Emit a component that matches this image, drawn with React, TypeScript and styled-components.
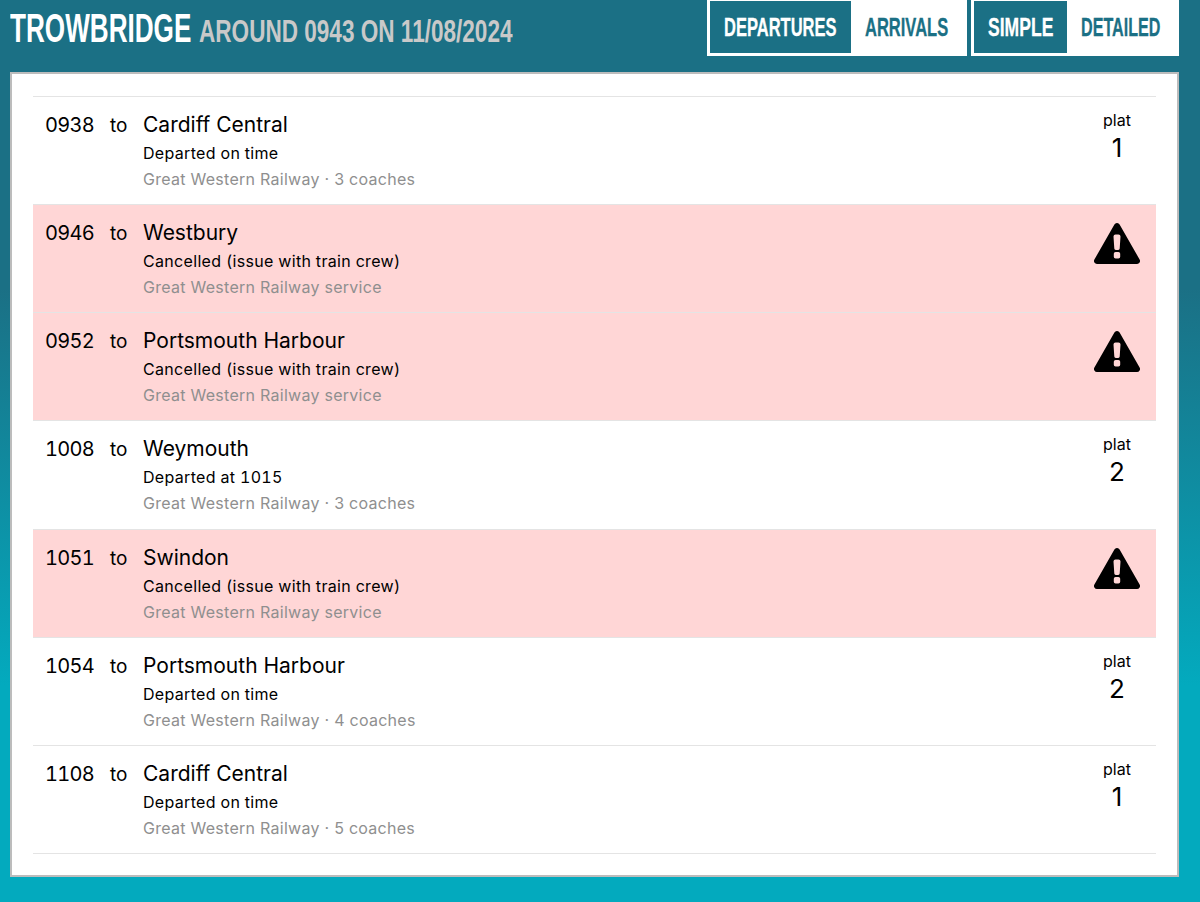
import React from "react";
import styled, { createGlobalStyle } from "styled-components";

const Global = createGlobalStyle`
  html, body { margin: 0; padding: 0; }
  body {
    height: 902px;
    overflow: hidden;
    background: linear-gradient(180deg, #1b7085 0%, #1b7085 32%, #03aabe 76%, #03aabe 100%);
    font-family: Inter, "Liberation Sans", sans-serif;
    color: #000;
  }
`;

const Page = styled.div`
  width: 1200px;
  height: 902px;
  box-sizing: border-box;
  padding: 0 21px 25px 10px;
  display: flex;
  flex-direction: column;
`;

const Header = styled.header`
  height: 72px;
  display: flex;
  justify-content: space-between;
  align-items: flex-start;
`;

const Title = styled.h1`
  margin: 8px 0 0;
  display: flex;
  align-items: baseline;
  gap: 8px;
  font-family: "Liberation Sans", sans-serif;
  font-weight: 700;
  line-height: 40px;
  white-space: nowrap;
`;

const Station = styled.div`
  width: 181px;
  color: #fff;
  font-size: 41px;
  & > span {
    display: inline-block;
    transform: scaleX(0.637);
    transform-origin: left;
  }
`;

const Around = styled.div`
  width: 314px;
  color: #c9c9c9;
  font-size: 32px;
  & > span {
    display: inline-block;
    transform: scaleX(0.705);
    transform-origin: left;
  }
`;

const Tabs = styled.div`
  display: flex;
  gap: 4px;
`;

const TabGroup = styled.div`
  display: flex;
  background: #fff;
  padding: 1px 0 3px 3px;
  height: 56px;
  box-sizing: border-box;
`;

const Tab = styled.div<{ $active?: boolean; $w: number; $sx: number }>`
  width: ${(p) => p.$w}px;
  box-sizing: border-box;
  padding-left: 14px;
  display: flex;
  align-items: center;
  font-family: "Liberation Sans", sans-serif;
  font-weight: 700;
  font-size: 26px;
  background: ${(p) => (p.$active ? "#1b7085" : "#fff")};
  color: ${(p) => (p.$active ? "#fff" : "#1b7085")};
  overflow: hidden;
  & > span {
    flex: none;
    display: inline-block;
    transform: scaleX(${(p) => p.$sx});
    transform-origin: left;
    white-space: nowrap;
    -webkit-text-stroke: 0.3px currentColor;
  }
`;

const Panel = styled.main`
  flex: 1;
  background: #fff;
  border: 2px solid #bcbcbc;
  box-sizing: border-box;
  padding: 22px 21px 0;
`;

const List = styled.div`
  border-top: 1px solid #e4e4e4;
`;

const Row = styled.div<{ $cancelled?: boolean }>`
  height: 108.17px;
  box-sizing: border-box;
  border-bottom: 1px solid #e4e4e4;
  background: ${(p) => (p.$cancelled ? "#ffd6d6" : "#fff")};
  display: grid;
  grid-template-columns: 66px 32px 1fr 78px;
  padding-left: 12px;
`;

const Time = styled.div`
  font-size: 20px;
  font-variant-numeric: tabular-nums;
  letter-spacing: -0.7px;
  line-height: 26px;
  padding-top: 15px;
`;

const To = styled.div`
  font-size: 19px;
  line-height: 26px;
  padding-top: 16px;
  margin-left: -1px;
`;

const Details = styled.div`
  padding-top: 15px;
  display: flex;
  flex-direction: column;
`;

const Destination = styled.div`
  font-size: 21px;
  line-height: 26px;
`;

const Status = styled.div`
  font-size: 16px;
  font-variant-numeric: tabular-nums;
  letter-spacing: 0.32px;
  line-height: 26px;
  margin-top: 2px;
`;

const Operator = styled.div`
  font-size: 16px;
  letter-spacing: 0.27px;
  line-height: 26px;
  color: #8f8f8f;
`;

const Side = styled.div`
  display: flex;
  flex-direction: column;
  align-items: center;
  padding-top: 14px;
`;

const PlatLabel = styled.div`
  font-size: 16px;
  line-height: 19px;
`;

const PlatNumber = styled.div`
  font-size: 26px;
  line-height: 34px;
  margin-top: 1px;
`;

const WarnSvg = styled.svg`
  width: 46px;
  height: 41px;
  margin-top: 4px;
  fill: #000;
`;

const WarnIcon = () => (
  <WarnSvg viewBox="0 0 46 41">
    <path
      fillRule="evenodd"
      d="M20.4 1.5a3 3 0 0 1 5.2 0L45.6 36.5a3 3 0 0 1-2.6 4.5H3a3 3 0 0 1-2.6-4.5Z
         M21.5 11.5h3a2 2 0 0 1 2 2l-.8 12a1.5 1.5 0 0 1-1.5 1.4h-2.4a1.5 1.5 0 0 1-1.5-1.4l-.8-12a2 2 0 0 1 2-2Z
         M21.6 29h2.8a1.8 1.8 0 0 1 1.8 1.8v2.9a1.8 1.8 0 0 1-1.8 1.8h-2.8a1.8 1.8 0 0 1-1.8-1.8v-2.9a1.8 1.8 0 0 1 1.8-1.8Z"
    />
  </WarnSvg>
);

type Svc = { t: string; d: string; s: string; o: string; p?: string };

const services: Svc[] = [
  { t: "0938", d: "Cardiff Central", s: "Departed on time", o: "Great Western Railway · 3 coaches", p: "1" },
  { t: "0946", d: "Westbury", s: "Cancelled (issue with train crew)", o: "Great Western Railway service" },
  { t: "0952", d: "Portsmouth Harbour", s: "Cancelled (issue with train crew)", o: "Great Western Railway service" },
  { t: "1008", d: "Weymouth", s: "Departed at 1015", o: "Great Western Railway · 3 coaches", p: "2" },
  { t: "1051", d: "Swindon", s: "Cancelled (issue with train crew)", o: "Great Western Railway service" },
  { t: "1054", d: "Portsmouth Harbour", s: "Departed on time", o: "Great Western Railway · 4 coaches", p: "2" },
  { t: "1108", d: "Cardiff Central", s: "Departed on time", o: "Great Western Railway · 5 coaches", p: "1" },
];

export default function App() {
  return (
    <Page>
      <Global />
      <Header>
        <Title>
          <Station><span>TROWBRIDGE</span></Station>
          <Around><span>AROUND 0943 ON 11/08/2024</span></Around>
        </Title>
        <Tabs>
          <TabGroup>
            <Tab $active $w={141} $sx={0.635}><span>DEPARTURES</span></Tab>
            <Tab $w={116} $sx={0.635}><span>ARRIVALS</span></Tab>
          </TabGroup>
          <TabGroup>
            <Tab $active $w={93} $sx={0.675}><span>SIMPLE</span></Tab>
            <Tab $w={112} $sx={0.62}><span>DETAILED</span></Tab>
          </TabGroup>
        </Tabs>
      </Header>
      <Panel>
        <List>
          {services.map((s) => (
            <Row key={s.t} $cancelled={!s.p}>
              <Time>{s.t}</Time>
              <To>to</To>
              <Details>
                <Destination>{s.d}</Destination>
                <Status>{s.s}</Status>
                <Operator>{s.o}</Operator>
              </Details>
              <Side>
                {s.p ? (
                  <>
                    <PlatLabel>plat</PlatLabel>
                    <PlatNumber>{s.p}</PlatNumber>
                  </>
                ) : (
                  <WarnIcon />
                )}
              </Side>
            </Row>
          ))}
        </List>
      </Panel>
    </Page>
  );
}
